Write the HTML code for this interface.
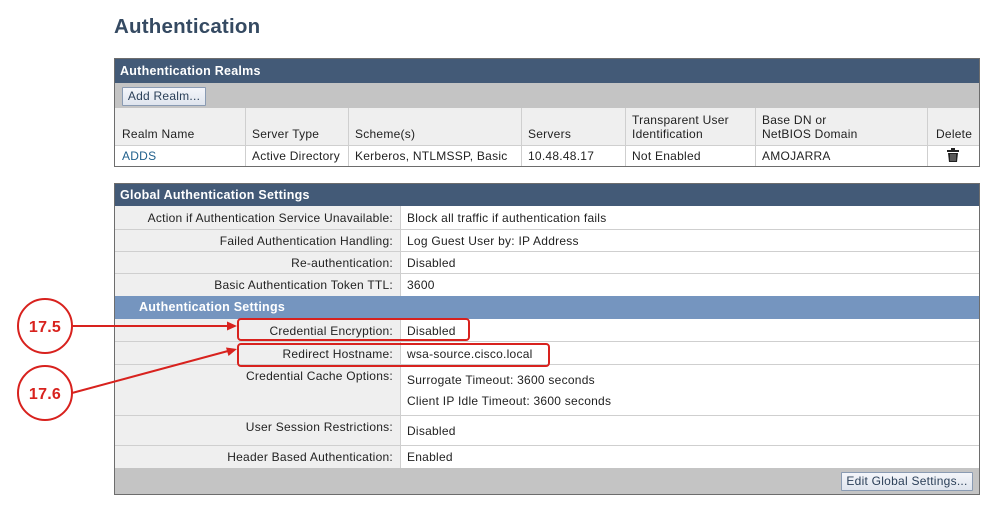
<!DOCTYPE html>
<html><head><meta charset="utf-8"><style>
body{margin:0;width:998px;height:509px;background:#fff;position:relative;font-family:"Liberation Sans",Arial,sans-serif;font-size:12px;letter-spacing:0.25px;color:#222;overflow:hidden}
.a{position:absolute;white-space:nowrap}
.hdr{background:#435a77;color:#fff;font-weight:bold;font-size:12.5px}
.ln{position:absolute;background:#cfcfcf}
.btn{position:absolute;border:1px solid #8a9bb3;background:linear-gradient(#f4f6fa,#dfe5ee);color:#2b3f58;font-size:12px;text-align:center;border-radius:1px}
</style></head><body>
<div class="a" style="left:114px;top:15px;font-size:20.5px;font-weight:bold;color:#354a62;letter-spacing:0.2px">Authentication</div>

<div class="a" style="left:114px;top:58px;width:864px;height:107px;border:1px solid #6d6d6d;background:#fff"></div>
<div class="a hdr" style="left:115px;top:59px;width:864px;height:24px;line-height:24px;padding-left:5px;box-sizing:border-box">Authentication Realms</div>
<div class="a" style="left:115px;top:83px;width:864px;height:25px;background:#c4c4c4"></div>
<div class="btn" style="left:122px;top:87px;width:82px;height:17px;line-height:17px">Add Realm...</div>
<div class="a" style="left:115px;top:108px;width:864px;height:37px;background:#efefef"></div>
<div class="ln" style="left:115px;top:145px;width:864px;height:1px"></div>
<div class="ln" style="left:245px;top:108px;width:1px;height:58px"></div>
<div class="ln" style="left:348px;top:108px;width:1px;height:58px"></div>
<div class="ln" style="left:521px;top:108px;width:1px;height:58px"></div>
<div class="ln" style="left:625px;top:108px;width:1px;height:58px"></div>
<div class="ln" style="left:755px;top:108px;width:1px;height:58px"></div>
<div class="ln" style="left:927px;top:108px;width:1px;height:58px"></div>
<div class="a" style="left:122px;top:127px">Realm Name</div>
<div class="a" style="left:252px;top:127px">Server Type</div>
<div class="a" style="left:355px;top:127px">Scheme(s)</div>
<div class="a" style="left:528px;top:127px">Servers</div>
<div class="a" style="left:632px;top:113px;line-height:14px">Transparent User<br>Identification</div>
<div class="a" style="left:762px;top:113px;line-height:14px">Base DN or<br>NetBIOS Domain</div>
<div class="a" style="left:936px;top:127px">Delete</div>
<div class="a" style="left:122px;top:149px;color:#1f5f8b">ADDS</div>
<div class="a" style="left:252px;top:149px">Active Directory</div>
<div class="a" style="left:355px;top:149px">Kerberos, NTLMSSP, Basic</div>
<div class="a" style="left:528px;top:149px">10.48.48.17</div>
<div class="a" style="left:632px;top:149px">Not Enabled</div>
<div class="a" style="left:762px;top:149px">AMOJARRA</div>
<svg class="a" style="left:947px;top:148px" width="12" height="14" viewBox="0 0 12 14"><rect x="0" y="2" width="12" height="2" fill="#222"/><rect x="4" y="0" width="4" height="2" fill="#222"/><path d="M1 5h10l-1 9H2z" fill="#222"/><path d="M4 6v7M6 6v7M8 6v7" stroke="#aaa" stroke-width="0.8"/></svg>

<div class="a" style="left:114px;top:183px;width:864px;height:310px;border:1px solid #6d6d6d;background:#fff"></div>
<div class="a hdr" style="left:115px;top:184px;width:864px;height:22px;line-height:22px;padding-left:5px;box-sizing:border-box">Global Authentication Settings</div>
<div class="a" style="left:115px;top:206px;width:285px;height:262px;background:#efefef"></div>
<div class="ln" style="left:400px;top:206px;width:1px;height:262px"></div>
<div class="ln" style="left:115px;top:229px;width:864px;height:1px"></div>
<div class="ln" style="left:115px;top:251px;width:864px;height:1px"></div>
<div class="ln" style="left:115px;top:273px;width:864px;height:1px"></div>
<div class="a" style="left:115px;top:296px;width:864px;height:23px;background:#7595bf;color:#fff;font-weight:bold;font-size:12.5px;line-height:23px;padding-left:24px;box-sizing:border-box">Authentication Settings</div>
<div class="ln" style="left:115px;top:341px;width:864px;height:1px"></div>
<div class="ln" style="left:115px;top:364px;width:864px;height:1px"></div>
<div class="ln" style="left:115px;top:415px;width:864px;height:1px"></div>
<div class="ln" style="left:115px;top:445px;width:864px;height:1px"></div>
<div class="a" style="left:115px;top:468px;width:864px;height:26px;background:#c4c4c4"></div>
<div class="btn" style="left:841px;top:472px;width:130px;height:17px;line-height:17px">Edit Global Settings...</div>

<div class="a" style="right:605px;top:211px">Action if Authentication Service Unavailable:</div>
<div class="a" style="right:605px;top:234px">Failed Authentication Handling:</div>
<div class="a" style="right:605px;top:256px">Re-authentication:</div>
<div class="a" style="right:605px;top:278px">Basic Authentication Token TTL:</div>
<div class="a" style="right:605px;top:324px">Credential Encryption:</div>
<div class="a" style="right:605px;top:347px">Redirect Hostname:</div>
<div class="a" style="right:605px;top:369px">Credential Cache Options:</div>
<div class="a" style="right:605px;top:420px">User Session Restrictions:</div>
<div class="a" style="right:605px;top:450px">Header Based Authentication:</div>

<div class="a" style="left:407px;top:211px">Block all traffic if authentication fails</div>
<div class="a" style="left:407px;top:234px">Log Guest User by: IP Address</div>
<div class="a" style="left:407px;top:256px">Disabled</div>
<div class="a" style="left:407px;top:278px">3600</div>
<div class="a" style="left:407px;top:324px">Disabled</div>
<div class="a" style="left:407px;top:347px">wsa-source.cisco.local</div>
<div class="a" style="left:407px;top:373px">Surrogate Timeout: 3600 seconds</div>
<div class="a" style="left:407px;top:394px">Client IP Idle Timeout: 3600 seconds</div>
<div class="a" style="left:407px;top:424px">Disabled</div>
<div class="a" style="left:407px;top:450px">Enabled</div>

<svg class="a" style="left:0;top:0" width="998" height="509">
<g fill="none" stroke="#d8221e" stroke-width="2">
<rect x="238" y="319" width="231" height="21" rx="3"/>
<rect x="238" y="344" width="311" height="22" rx="3"/>
<circle cx="45" cy="326" r="27"/>
<circle cx="45" cy="393" r="27"/>
<line x1="72" y1="326" x2="228" y2="326"/>
<line x1="72" y1="393" x2="228" y2="351"/>
</g>
<path d="M237 326l-10-4.5v9z" fill="#d8221e"/>
<path d="M237 349l-11 -1.5 2.5 8.5z" fill="#d8221e"/>
<g fill="#d8221e" font-family="Liberation Sans,Arial,sans-serif" font-weight="bold" font-size="16" text-anchor="middle">
<text x="45" y="332">17.5</text><text x="45" y="399">17.6</text></g>
</svg>
</body></html>
